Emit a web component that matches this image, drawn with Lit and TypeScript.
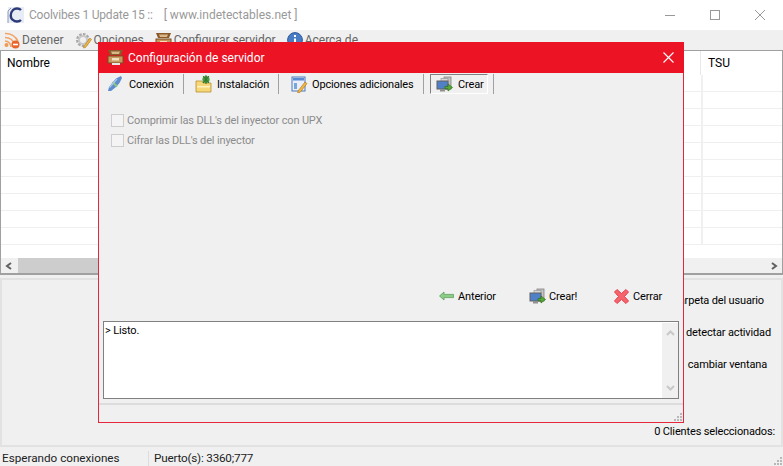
import { LitElement, html, css, svg } from "lit";
import { customElement } from "lit/decorators.js";

const iconLogo = svg`<svg width="18" height="20" viewBox="0 0 18 20"><rect x="1" y="2" width="16" height="16" fill="#e8ecf4"/><path d="M14 5C12 3 8 3 6 5C3 8 3 13 6 15C8 17 12 17 14 15" fill="none" stroke="#2c3a78" stroke-width="2.4"/><path d="M1 18V6L4 3" fill="none" stroke="#8a96bb" stroke-width="1"/></svg>`;
const iconFeed = svg`<svg width="17" height="17" viewBox="0 0 17 17"><g fill="none" stroke="#f2a468" stroke-width="1.7"><path d="M2 9a6 6 0 0 1 6 6"/><path d="M2 5.5a10 10 0 0 1 9.5 7"/><path d="M2 1.5a13.5 13.5 0 0 1 13 8"/></g><circle cx="3.5" cy="13" r="2" fill="#f09a50"/><circle cx="12.5" cy="12.5" r="4" fill="#e8642a"/><rect x="10" y="11.7" width="5" height="1.6" fill="#fff"/></svg>`;
const iconGear = svg`<svg width="17" height="17" viewBox="0 0 17 17"><circle cx="8" cy="8" r="5.5" fill="none" stroke="#a8a8a8" stroke-width="3" stroke-dasharray="2.4 1.2"/><circle cx="8" cy="8" r="4" fill="none" stroke="#c8c8c8" stroke-width="2"/><path d="M9 14L15 6L16.5 7.5L10.5 15.5L8.5 16Z" fill="#f0b840" stroke="#b07820" stroke-width=".6"/></svg>`;
const iconBox = svg`<svg width="17" height="17" viewBox="0 0 17 17"><path d="M1 1H16L14 6H3Z" fill="#8a5a2a"/><path d="M4 2.5H13L12 5H5Z" fill="#d8b888"/><rect x="1" y="7" width="15" height="7" fill="#c89a60" stroke="#7a4c20"/><rect x="5" y="9" width="7" height="2.5" fill="#f0e0c0"/><rect x="5" y="14" width="8" height="2" fill="#e8e8e8"/></svg>`;
const iconInfo = svg`<svg width="16" height="16" viewBox="0 0 16 16"><circle cx="8" cy="8" r="7.4" fill="#4a7cc4" stroke="#2c5a9c"/><rect x="7" y="3" width="2" height="2" fill="#fff"/><rect x="7" y="6.5" width="2" height="6" fill="#fff"/></svg>`;
const iconLink = svg`<svg width="16" height="18" viewBox="0 0 16 18"><path d="M1 16L2 12L6 7L9 3.5L14 1L15 3L12.5 8L9 12L4 16Z" fill="#5f8ccc"/><path d="M5.5 7L10 11.5" stroke="#8cc878" stroke-width="2"/><path d="M2.5 12.5L10 4" stroke="#a8c8f0" stroke-width="1.2"/></svg>`;
const iconFolder = svg`<svg width="17" height="18" viewBox="0 0 17 18"><path d="M1 6H7L8 8H16V17H1Z" fill="#f6d878" stroke="#b89030" stroke-width=".8"/><rect x="2" y="11" width="13" height="1.5" fill="#fff2c0"/><circle cx="11" cy="4.5" r="3.6" fill="#4c9a40"/><path d="M8 1L14 8M14 1L8 8M11 0V9" stroke="#2f7428" stroke-width="1"/></svg>`;
const iconForm = svg`<svg width="17" height="18" viewBox="0 0 17 18"><rect x="1" y="2" width="13" height="14" fill="#e8eefa" stroke="#4c78b8"/><rect x="2" y="3" width="11" height="2.5" fill="#5c8ad0"/><rect x="3" y="8" width="3" height="6" fill="#7aa4dc"/><path d="M7 16L14 7L16 8.6L9 17.4L6.6 17.6Z" fill="#f0b840" stroke="#a87018" stroke-width=".6"/></svg>`;
const iconPc = svg`<svg width="17" height="17" viewBox="0 0 17 17"><rect x="8" y="1" width="7" height="12" fill="#c4c4c4" stroke="#808080" stroke-width=".8"/><rect x="5" y="2.5" width="7" height="10" fill="#d8d8d8" stroke="#909090" stroke-width=".6"/><rect x="1" y="5" width="11" height="8" fill="#4f80c8" stroke="#606060"/><rect x="4" y="13" width="5" height="2.5" fill="#909090"/><path d="M9 10.5H12V8L16.5 11.5L12 15V12.8H9Z" fill="#58a838" stroke="#2e7018" stroke-width=".7"/></svg>`;
const iconBack = svg`<svg width="15" height="10" viewBox="0 0 15 10"><path d="M0.5 5L5 1V3.4H14.5V6.6H5V9Z" fill="#8ccc88" stroke="#5ca058" stroke-width=".8"/></svg>`;
const iconX = svg`<svg width="17" height="17" viewBox="0 0 17 17"><path d="M1.5 4L4 1.5L8.5 5.5L13 1.5L15.5 4L11.5 8.5L15.5 13L13 15.5L8.5 11.5L4 15.5L1.5 13L5.5 8.5Z" fill="#f4646c" stroke="#e8404c" stroke-width="1"/></svg>`;
const grip = svg`<svg width="9" height="9" viewBox="0 0 9 9" fill="#b8b8b8"><rect x="6" y="0" width="2" height="2"/><rect x="3" y="3" width="2" height="2"/><rect x="6" y="3" width="2" height="2"/><rect x="0" y="6" width="2" height="2"/><rect x="3" y="6" width="2" height="2"/><rect x="6" y="6" width="2" height="2"/></svg>`;
const chev = (d: string, c: string) => svg`<svg width="9" height="8" viewBox="0 0 9 8"><path d="${d}" fill="none" stroke="${c}" stroke-width="2"/></svg>`;

@customElement("app-root")
export class AppRoot extends LitElement {
  static styles = css`
    :host { display: block; position: relative; width: 783px; height: 466px; overflow: hidden; background: #f0f0f0;
      font: 12px "Roboto", "Liberation Sans", sans-serif; color: #000; }
    * { box-sizing: border-box; }
    svg { display: block; flex: none; }
    .main { display: flex; flex-direction: column; height: 466px; }
    .title { height: 30px; background: #fff; display: flex; align-items: center; padding-left: 7px; color: #999; white-space: nowrap; }
    .title .t { margin-left: 4px; letter-spacing: -0.2px; }
    .title .u { margin-left: 11px; }
    .title .ctl { margin-left: auto; display: flex; }
    .ctl span { width: 45px; height: 30px; display: flex; align-items: center; justify-content: center; }
    .toolbar { height: 20px; display: flex; align-items: center; padding-left: 3px; color: #666; white-space: nowrap; }
    .tool { display: flex; align-items: center; gap: 2px; margin-right: 11px; }
    .list { height: 225px; border: 2px solid #a0a0a0; border-width: 1px 1px 2px 1px; background: #fff; display: flex; flex-direction: column; }
    .grid { flex: 1; position: relative; overflow: hidden; }
    .head { height: 24px; display: flex; justify-content: space-between; padding: 0 0 0 6px; line-height: 24px; }
    .head .tsu { width: 82px; padding-left: 7px; border-left: 1px solid #e8e8e8; }
    .rows { height: 184px; }
    .row { height: 17px; border-bottom: 1px solid #efefef; display: flex; justify-content: flex-end; }
    .row i { width: 81px; border-left: 2px solid #f0f0f0; margin-bottom: -1px; }
    .hs { height: 15px; display: flex; background: #f0f0f0; }
    .hs .arr { width: 17px; display: flex; align-items: center; justify-content: center; }
    .hs .thumb { width: 500px; background: #cdcdcd; }
    .hs .arr.r { margin-left: auto; }
    .panel { height: 169px; margin-top: 3px; border: 2px solid #e2e2e2; position: relative; display: flex; flex-direction: column; align-items: flex-end; font-size: 11px; letter-spacing: -0.15px; }
    .opt { height: 32px; line-height: 32px; white-space: pre; }
    .opt.a { margin-top: 5px; padding-right: 17px; }
    .opt.b { padding-right: 10px; }
    .opt.c { padding-right: 14px; }
    .sel { margin-top: auto; padding: 0 6px 7px 0; }
    .status { height: 19px; display: flex; align-items: center; position: relative; white-space: nowrap; color: #222; font-size: 11.7px; padding-top: 3px; }
    .status .s1 { width: 149px; padding-left: 2px; border-right: 1px solid #dcdcdc; height: 15px; line-height: 15px; }
    .status .s2 { padding-left: 5px; letter-spacing: -0.2px; }
    .grip { position: absolute; right: 0; bottom: 0; }

    .dlg { position: absolute; left: 98px; top: 42px; width: 586px; height: 381px; background: #f0f0f0; border: 1px solid #e6263c; display: flex; flex-direction: column; }
    .dlg-title { background: #ec1325; color: #fff; display: flex; align-items: center; flex: none; margin: -1px -1px 0; width: calc(100% + 2px); padding-left: 9px; height: 31px; }
    .dlg-title .t { margin-left: 4px; }
    .dlg-title .x { margin-left: auto; margin-right: 10px; }
    .tabs { height: 21px; display: flex; flex: none; align-items: flex-start; white-space: nowrap; font-size: 11px; letter-spacing: -0.15px; padding-top: 1px; }
    .tab { height: 20px; display: flex; align-items: center; border-right: 1px solid #a0a0a0; }
    .t1 { width: 85px; padding-left: 8px; gap: 6px; }
    .t2 { width: 95px; padding-left: 11px; gap: 5px; }
    .t3 { width: 145px; padding-left: 12px; gap: 4px; }
    .t4 { width: 70px; padding-left: 6px; }
    .raised { height: 20px; width: 58px; display: flex; align-items: center; gap: 5px; padding-left: 5px; border: 1px solid; border-color: #808080 #fff #fff #808080; background: #f0f0f0; }
    .body { flex: 1; position: relative; display: flex; flex-direction: column; padding: 16px 4px 0 4px; font-size: 11px; letter-spacing: -0.15px; }
    .chk { display: flex; align-items: center; gap: 3px; height: 20px; padding-left: 8px; color: #8c8c8c; white-space: nowrap; }
    .chk b { width: 13px; height: 13px; border: 1px solid #cdcdcd; background: #f4f4f4; flex: none; }
    .btns { margin-top: auto; height: 20px; display: flex; align-items: center; white-space: nowrap; justify-content: flex-end; }
    .btn { display: flex; align-items: center; gap: 3px; }
    .b1 { width: 90px; gap: 4px; }
    .b2 { width: 84px; }
    .b3 { width: 66px; }
    .log { height: 78px; margin-top: 15px; border: 1px solid #808080; background: #fff; display: flex; justify-content: space-between; padding: 1px 0 0 1px; }
    .log .txt { line-height: 16px; }
    .vs { width: 16px; background: #f0f0f0; display: flex; flex-direction: column; justify-content: space-between; align-items: center; padding: 6px 0; }
    .foot { height: 19px; margin-top: 4px; border-top: 2px solid #dcdcdc; margin-left: -4px; margin-right: -4px; }
  `;

  render() {
    const rows = Array.from({ length: 10 }, () => html`<div class="row"><i></i></div>`);
    return html`
      <div class="main">
        <div class="title">${iconLogo}<span class="t">Coolvibes 1 Update 15 ::</span><span class="u">[ www.indetectables.net ]</span>
          <div class="ctl">
            <span><svg width="11" height="11" viewBox="0 0 11 11"><path d="M0 5.5H10" stroke="#999"/></svg></span>
            <span><svg width="11" height="11" viewBox="0 0 11 11"><rect x=".5" y=".5" width="9" height="9" fill="none" stroke="#999"/></svg></span>
            <span><svg width="11" height="11" viewBox="0 0 11 11"><path d="M0 0L10 10M10 0L0 10" stroke="#999"/></svg></span>
          </div>
        </div>
        <div class="toolbar">
          <div class="tool">${iconFeed}<span>Detener</span></div>
          <div class="tool">${iconGear}<span>Opciones</span></div>
          <div class="tool">${iconBox}<span>Configurar servidor</span></div>
          <div class="tool">${iconInfo}<span>Acerca de</span></div>
        </div>
        <div class="list">
          <div class="grid">
            <div class="head"><span>Nombre</span><span class="tsu">TSU</span></div>
            <div class="rows">${rows}</div>
          </div>
          <div class="hs">
            <span class="arr">${chev("M6 1L2 4L6 7", "#606060")}</span>
            <span class="thumb"></span>
            <span class="arr r">${chev("M3 1L7 4L3 7", "#606060")}</span>
          </div>
        </div>
        <div class="panel">
          <div class="opt a">Carpeta del usuario</div>
          <div class="opt b">No detectar actividad</div>
          <div class="opt c">Al   cambiar ventana</div>
          <div class="sel">0 Clientes seleccionados:</div>
        </div>
        <div class="status"><span class="s1">Esperando conexiones</span><span class="s2">Puerto(s): 3360;777</span><span class="grip">${grip}</span></div>
      </div>

      <div class="dlg">
        <div class="dlg-title">${iconBox}<span class="t">Configuración de servidor</span>
          <svg class="x" width="11" height="11" viewBox="0 0 11 11"><path d="M0.5 0.5L10.5 10.5M10.5 0.5L0.5 10.5" stroke="#fff" stroke-width="1.1"/></svg>
        </div>
        <div class="tabs">
          <div class="tab t1">${iconLink}<span>Conexión</span></div>
          <div class="tab t2">${iconFolder}<span>Instalación</span></div>
          <div class="tab t3">${iconForm}<span>Opciones adicionales</span></div>
          <div class="tab t4"><div class="raised">${iconPc}<span>Crear</span></div></div>
        </div>
        <div class="body">
          <div class="chk"><b></b><span>Comprimir las DLL's del inyector con UPX</span></div>
          <div class="chk"><b></b><span>Cifrar las DLL's del inyector</span></div>
          <div class="btns">
            <div class="btn b1">${iconBack}<span>Anterior</span></div>
            <div class="btn b2">${iconPc}<span>Crear!</span></div>
            <div class="btn b3">${iconX}<span>Cerrar</span></div>
          </div>
          <div class="log"><span class="txt">&gt; Listo.</span>
            <div class="vs">${chev("M1 6L4.5 2.5L8 6", "#c8c8c8")}${chev("M1 2L4.5 5.5L8 2", "#c8c8c8")}</div>
          </div>
          <div class="foot"></div>
          <span class="grip">${grip}</span>
        </div>
      </div>
    `;
  }
}
